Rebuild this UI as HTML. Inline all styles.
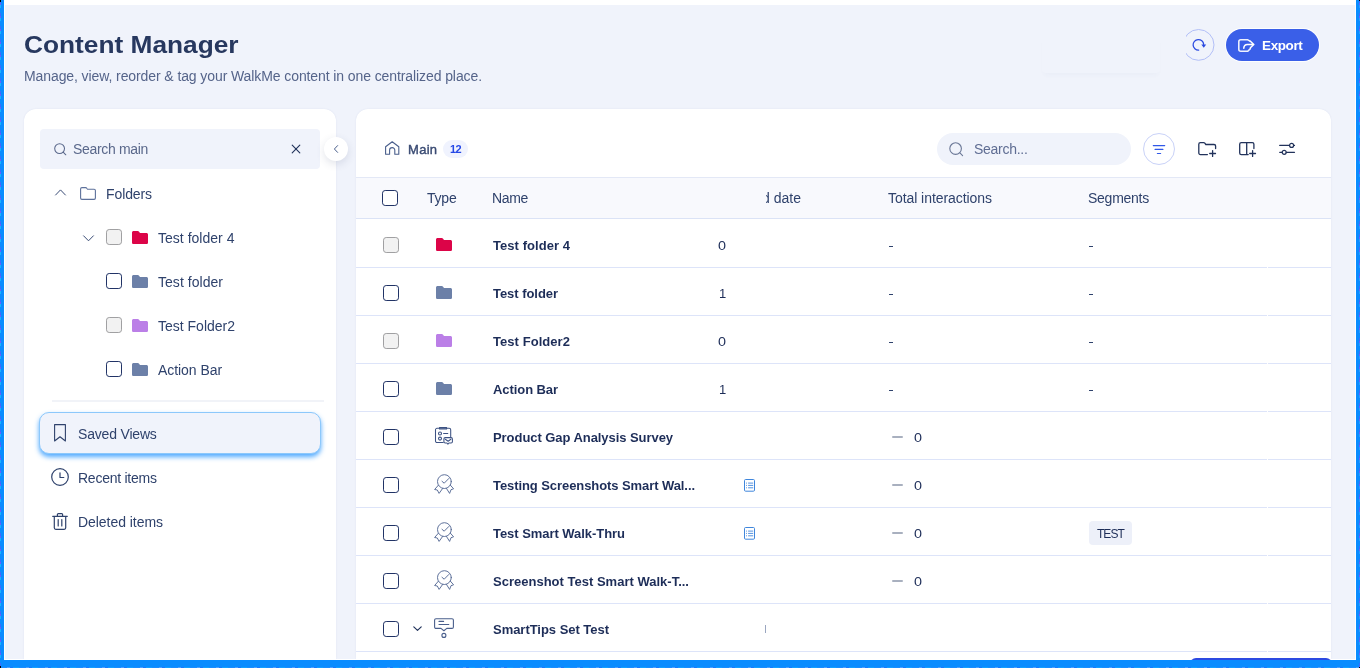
<!DOCTYPE html>
<html><head><meta charset="utf-8"><title>Content Manager</title>
<style>
*{box-sizing:border-box;margin:0;padding:0}
html,body{width:1360px;height:668px;overflow:hidden;background:#fff;font-family:"Liberation Sans",sans-serif;}
#frame{position:absolute;left:0;top:0;width:1360px;height:668px;background:#0a8cff;overflow:hidden}
#topw{position:absolute;left:4px;top:0;width:1352px;height:5px;background:#fff}
#app{position:absolute;left:4px;top:5px;width:1352px;height:655px;background:#fff}
#bg{position:absolute;left:5px;top:5px;width:1350px;height:654px;background:#f0f3fb}
.abs{position:absolute}
.t{position:absolute;white-space:pre;line-height:20px;height:20px;will-change:transform}
.panel{position:absolute;background:#fff;border-radius:12px 12px 0 0;box-shadow:0 0 1.5px rgba(100,120,180,.16)}
.cb{position:absolute;width:16px;height:16px;border:1.5px solid #213366;border-radius:3.2px;background:#fff}
.cb.dis{border:1px solid #a0a0a2;background:#f2f2f2}
.hl{position:absolute;height:1px;background:#dde4f9}
svg{position:absolute;overflow:visible}
</style></head><body>
<div id="frame"></div><div id="topw"></div><div id="app"></div><div id="bg"></div>
<!-- header buttons -->
<div class="abs" style="left:1042px;top:35px;width:118px;height:38px;border-radius:4px;background:rgba(255,255,255,.05);box-shadow:0 4px 5px -2px rgba(60,80,130,.035)"></div>
<svg style="left:1182px;top:28px" width="34" height="34" viewBox="0 0 34 34"><defs><clipPath id="rc"><rect x="4" y="0" width="30" height="34"/></clipPath></defs><g clip-path="url(#rc)"><circle cx="16.6" cy="16.9" r="15.4" fill="none" stroke="#b2bff7" stroke-width="1"/></g>
<path d="M16.7 22.1A5.3 5.3 0 1 1 21.7 16.4" fill="none" stroke="#2a49e0" stroke-width="1.25" stroke-linecap="round"/><path d="M19.3 16.6h4.9l-2.45 3.1z" fill="#2a49e0"/></svg>
<div class="abs" style="left:1226.4px;top:29px;width:92.8px;height:32px;border-radius:16px;background:#3a5fe8;box-shadow:0 0 0 1px rgba(255,255,255,.85)"></div>
<svg style="left:1238px;top:38.6px" width="17" height="13" viewBox="0 0 17 13" fill="none" stroke="#fff" stroke-width="1.55" stroke-linejoin="round" stroke-linecap="round"><path d="M12 2.2L9.8 0.8H2.8C1.7 0.8 0.8 1.7 0.8 2.8v7.4c0 1.1.9 2 2 2h7l2.6-2.6" stroke-opacity=".92"/><path d="M5.8 9.2c0-2.400000000000001 1.3-3.7 3.6-3.7h6M12.4 2.3l3.4 3.2-3.4 3.2"/></svg>

<!-- left panel -->
<div class="panel" style="left:24px;top:109px;width:312px;height:550px"></div>
<div class="abs" style="left:40px;top:129px;width:280px;height:40px;border-radius:4px;background:#f0f3fb"></div>
<svg style="left:54px;top:142.5px" width="13" height="13" viewBox="0 0 13 13" fill="none" stroke="#5a688b" stroke-width="1.05" stroke-linecap="round"><circle cx="5.6" cy="5.6" r="4.9"/><path d="M9.2 9.2L11.8 11.8"/></svg>
<svg style="left:291px;top:144px" width="10" height="10" viewBox="0 0 10 10" fill="none" stroke="#22335b" stroke-width="1.15" stroke-linecap="round"><path d="M1.2 1.2l7.6 7.6M8.8 1.2L1.2 8.8"/></svg>

<!-- tree -->
<svg style="left:54.5px;top:189px" width="11" height="7" viewBox="0 0 11 7" fill="none" stroke="#3a4c76" stroke-width="1" stroke-linecap="round" stroke-linejoin="round"><path d="M0.6 6L5.5 0.9l4.9 5.1"/></svg>
<svg style="left:80px;top:187px" width="16" height="13" viewBox="0 0 16 13" fill="none" stroke="#5d719b" stroke-width="1.1" stroke-linejoin="round"><path d="M1.9 0.6h3.7c.5 0 .9.2 1.1.6l.8 1.1h6.600000000000001c.7 0 1.3.6 1.3 1.3v7.5c0 .7-.6 1.3-1.3 1.3H1.9c-.7 0-1.3-.6-1.3-1.3V1.9c0-.7.6-1.3 1.3-1.3z"/></svg>

<svg style="left:82.5px;top:234.5px" width="11" height="7" viewBox="0 0 11 7" fill="none" stroke="#3a4c76" stroke-width="1" stroke-linecap="round" stroke-linejoin="round"><path d="M0.6 0.8L5.5 5.8l4.9-5"/></svg>
<div class="cb dis" style="left:106px;top:229px"></div>
<svg style="left:132px;top:231px" width="16" height="13" viewBox="0 0 16 13"><path fill="#dc0448" d="M1.6 0h4.1c.5 0 .9.2 1.2.6L8 2h6.4c.9 0 1.600000000000001.7 1.600000000000001 1.600000000000001v7.800000000000001c0 .9-.7 1.600000000000001-1.600000000000001 1.600000000000001H1.6C.7 13 0 12.3 0 11.4V1.6C0 .7.7 0 1.6 0z"/></svg>

<div class="cb" style="left:106px;top:273px"></div>
<svg style="left:132px;top:275px" width="16" height="13" viewBox="0 0 16 13"><path fill="#6c80a8" d="M1.6 0h4.1c.5 0 .9.2 1.2.6L8 2h6.4c.9 0 1.600000000000001.7 1.600000000000001 1.600000000000001v7.800000000000001c0 .9-.7 1.600000000000001-1.600000000000001 1.600000000000001H1.6C.7 13 0 12.3 0 11.4V1.6C0 .7.7 0 1.6 0z"/></svg>

<div class="cb dis" style="left:106px;top:317px"></div>
<svg style="left:132px;top:319px" width="16" height="13" viewBox="0 0 16 13"><path fill="#bb7fe7" d="M1.6 0h4.1c.5 0 .9.2 1.2.6L8 2h6.4c.9 0 1.600000000000001.7 1.600000000000001 1.600000000000001v7.800000000000001c0 .9-.7 1.600000000000001-1.600000000000001 1.600000000000001H1.6C.7 13 0 12.3 0 11.4V1.6C0 .7.7 0 1.6 0z"/></svg>

<div class="cb" style="left:106px;top:361px"></div>
<svg style="left:132px;top:363px" width="16" height="13" viewBox="0 0 16 13"><path fill="#6c80a8" d="M1.6 0h4.1c.5 0 .9.2 1.2.6L8 2h6.4c.9 0 1.600000000000001.7 1.600000000000001 1.600000000000001v7.800000000000001c0 .9-.7 1.600000000000001-1.600000000000001 1.600000000000001H1.6C.7 13 0 12.3 0 11.4V1.6C0 .7.7 0 1.6 0z"/></svg>

<div class="hl" style="left:52px;top:400px;width:272px;background:#f1f3f8;height:2px"></div>

<!-- saved views -->
<div class="abs" style="left:39px;top:412.3px;width:282px;height:41.4px;border-radius:10px;background:#f0f3fb;border:1px solid #8cc8fb;box-shadow:0 3px 5px rgba(50,155,255,.85)"></div>
<svg style="left:54px;top:424px" width="12" height="18" viewBox="0 0 12 18" fill="none" stroke="#2f426c" stroke-width="1.1" stroke-linejoin="round"><path d="M0.6 0.6h10.8v16.4L6 12.7 0.6 17z"/></svg>
<svg style="left:51px;top:468px" width="18" height="18" viewBox="0 0 18 18" fill="none" stroke="#2f426c" stroke-width="1.2" stroke-linecap="round" stroke-linejoin="round"><circle cx="9" cy="9" r="8.3"/><path d="M9 4.8v4.700000000000001h3.8"/></svg>
<svg style="left:52px;top:513px" width="16" height="17" viewBox="0 0 16 17" fill="none" stroke="#2f426c" stroke-width="1.2" stroke-linecap="round" stroke-linejoin="round"><path d="M0.7 3.3h14.6M5.4 3.2V1.6c0-.5.4-.9.9-.9h3.4c.5 0 .9.4.9.9v1.600000000000001M2.3 3.4v11.4c0 .8.7 1.5 1.5 1.5h8.4c.8 0 1.5-.7 1.5-1.5V3.4M6.2 6.6v6.4M9.8 6.6v6.4"/></svg>

<!-- main panel -->
<div class="panel" style="left:356px;top:109px;width:975px;height:550px"></div>
<!-- collapse btn -->
<div class="abs" style="left:324px;top:137px;width:24px;height:24px;border-radius:12px;background:#fff;box-shadow:0 3px 8px rgba(47,66,108,.14)"></div>
<svg style="left:333px;top:144px" width="6" height="10" viewBox="0 0 6 10" fill="none" stroke="#4a5f8c" stroke-width="1" stroke-linecap="round" stroke-linejoin="round"><path d="M4.6 1.600000000000001L1.4 5l3.2 3.4"/></svg>

<!-- breadcrumb -->
<svg style="left:384.8px;top:141.4px" width="15" height="14" viewBox="0 0 15 14" fill="none" stroke="#4a5f8c" stroke-width="1.1" stroke-linejoin="round" stroke-linecap="round"><path d="M0.6 13.2V5.8L7.2 0.7l6.6 5.1v7.4H9.8V9.2c0-1.5-1.100000000000001-2.6-2.6-2.6S4.6 7.7 4.6 9.2v4z"/></svg>
<div class="abs" style="left:442.5px;top:140.2px;width:25.4px;height:17.8px;border-radius:9px;background:#f0f3fe"></div>

<!-- search pill -->
<div class="abs" style="left:937px;top:133px;width:194px;height:32px;border-radius:16px;background:#f0f3fb"></div>
<svg style="left:949px;top:142px" width="15" height="15" viewBox="0 0 15 15" fill="none" stroke="#6b7897" stroke-width="1.1" stroke-linecap="round"><circle cx="6.6" cy="6.6" r="5.8"/><path d="M10.9 10.9L13.6 13.6"/></svg>

<!-- filter -->
<div class="abs" style="left:1143px;top:133px;width:32px;height:32px;border-radius:16px;border:1px solid #c9d2f8;background:#fff"></div>
<svg style="left:1152px;top:144px" width="14" height="11" viewBox="0 0 14 11" fill="none" stroke="#3058e8" stroke-width="1.2" stroke-linecap="round"><path d="M1.3 1.600000000000001h11.4M3.1 5.4h7.800000000000001M5.4 9.5h3.2"/></svg>
<!-- folder plus -->
<svg style="left:1198px;top:141px" width="19" height="16" viewBox="0 0 19 16" fill="none" stroke="#22335b" stroke-width="1.3" stroke-linecap="round" stroke-linejoin="round"><path d="M9.4 13.6H2.4c-.9 0-1.600000000000001-.7-1.600000000000001-1.600000000000001V3.2c0-.9.7-1.600000000000001 1.600000000000001-1.600000000000001h3.2c.5 0 .9.2 1.2.6l1 1.3h8.200000000000001c.9 0 1.600000000000001.7 1.600000000000001 1.600000000000001v2.4M14.6 9.600000000000001v5.800000000000001M11.7 12.5h5.800000000000001"/></svg>
<!-- columns plus -->
<svg style="left:1239px;top:141px" width="18" height="16" viewBox="0 0 18 16" fill="none" stroke="#22335b" stroke-width="1.3" stroke-linecap="round" stroke-linejoin="round"><path d="M9.2 13.6H2.3c-.9 0-1.600000000000001-.7-1.600000000000001-1.600000000000001V3.2c0-.9.7-1.600000000000001 1.600000000000001-1.600000000000001h11c.9 0 1.600000000000001.7 1.600000000000001 1.600000000000001v4.4M7.7 1.600000000000001v12M13.6 9.600000000000001v5.800000000000001M10.7 12.5h5.800000000000001"/></svg>
<!-- sliders -->
<svg style="left:1279px;top:142px" width="17" height="14" viewBox="0 0 17 14" fill="none" stroke="#22335b" stroke-width="1.2" stroke-linecap="round"><path d="M0.7 3.4h9.6M14.6 3.4h.9M0.7 10.3h2.5M7.2 10.3h8.3"/><circle cx="12.6" cy="3.4" r="2"/><circle cx="5.2" cy="10.3" r="2"/></svg>

<!-- table header -->
<div class="abs" style="left:356px;top:177px;width:975px;height:42px;background:#f8f9fd;border-top:1px solid #e3e8f6;border-bottom:1px solid #dbe3f6"></div>
<div class="cb" style="left:382px;top:190px"></div>
<!-- clipped "d date" -->
<div class="abs" style="left:766px;top:188px;width:60px;height:20px;overflow:hidden"><div class="t" style="left:-4px;top:0;font-size:14px;color:#2f426c">d date</div></div>
<!-- rows -->
<div class="abs" style="left:889.3px;top:245.8px;width:3.7px;height:1.4px;background:#2f426c"></div><div class="abs" style="left:1089.3px;top:245.8px;width:3.7px;height:1.4px;background:#2f426c"></div>
<div class="abs" style="left:889.3px;top:293.8px;width:3.7px;height:1.4px;background:#2f426c"></div><div class="abs" style="left:1089.3px;top:293.8px;width:3.7px;height:1.4px;background:#2f426c"></div>
<div class="abs" style="left:889.3px;top:341.8px;width:3.7px;height:1.4px;background:#2f426c"></div><div class="abs" style="left:1089.3px;top:341.8px;width:3.7px;height:1.4px;background:#2f426c"></div>
<div class="abs" style="left:889.3px;top:389.8px;width:3.7px;height:1.4px;background:#2f426c"></div><div class="abs" style="left:1089.3px;top:389.8px;width:3.7px;height:1.4px;background:#2f426c"></div>
<div class="hl" style="left:356px;top:267px;width:975px"></div>
<div class="cb dis" style="left:383px;top:237px"></div>
<svg style="left:436px;top:238px" width="16" height="13" viewBox="0 0 16 13"><path fill="#dc0448" d="M1.6 0h4.1c.5 0 .9.2 1.2.6L8 2h6.4c.9 0 1.6.7 1.6 1.6v7.8c0 .9-.7 1.6-1.6 1.6H1.6C.7 13 0 12.3 0 11.4V1.6C0 .7.7 0 1.6 0z"/></svg>
<div class="hl" style="left:356px;top:315px;width:975px"></div>
<div class="cb" style="left:383px;top:285px"></div>
<svg style="left:436px;top:286px" width="16" height="13" viewBox="0 0 16 13"><path fill="#6c80a8" d="M1.6 0h4.1c.5 0 .9.2 1.2.6L8 2h6.4c.9 0 1.6.7 1.6 1.6v7.8c0 .9-.7 1.6-1.6 1.6H1.6C.7 13 0 12.3 0 11.4V1.6C0 .7.7 0 1.6 0z"/></svg>
<div class="hl" style="left:356px;top:363px;width:975px"></div>
<div class="cb dis" style="left:383px;top:333px"></div>
<svg style="left:436px;top:334px" width="16" height="13" viewBox="0 0 16 13"><path fill="#bb7fe7" d="M1.6 0h4.1c.5 0 .9.2 1.2.6L8 2h6.4c.9 0 1.6.7 1.6 1.6v7.8c0 .9-.7 1.6-1.6 1.6H1.6C.7 13 0 12.3 0 11.4V1.6C0 .7.7 0 1.6 0z"/></svg>
<div class="hl" style="left:356px;top:411px;width:975px"></div>
<div class="cb" style="left:383px;top:381px"></div>
<svg style="left:436px;top:382px" width="16" height="13" viewBox="0 0 16 13"><path fill="#6c80a8" d="M1.6 0h4.1c.5 0 .9.2 1.2.6L8 2h6.4c.9 0 1.6.7 1.6 1.6v7.8c0 .9-.7 1.6-1.6 1.6H1.6C.7 13 0 12.3 0 11.4V1.6C0 .7.7 0 1.6 0z"/></svg>
<div class="hl" style="left:356px;top:459px;width:975px"></div>
<div class="cb" style="left:383px;top:429px"></div>
<div class="hl" style="left:356px;top:507px;width:975px"></div>
<div class="cb" style="left:383px;top:477px"></div>
<div class="hl" style="left:356px;top:555px;width:975px"></div>
<div class="cb" style="left:383px;top:525px"></div>
<div class="hl" style="left:356px;top:603px;width:975px"></div>
<div class="cb" style="left:383px;top:573px"></div>
<div class="hl" style="left:356px;top:651px;width:975px"></div>
<div class="cb" style="left:383px;top:621px"></div>
<svg style="left:434px;top:474px" width="20" height="20" viewBox="0 0 20 20" fill="none" stroke="#566a96" stroke-width="0.95" stroke-linejoin="round" stroke-linecap="round"><circle cx="10.4" cy="7.6" r="6.9"/><path d="M8 7.3l2.2 1.9 4.6-4.700000000000001"/><path d="M4.4 11.2L0.6 15.5l2.7.5 1.8 3.4 3.5-4.900000000000001M16.4 11.2l3.2 3.6-2.6.9-1.4 3.7-3.1-4.900000000000001"/></svg>
<svg style="left:434px;top:522px" width="20" height="20" viewBox="0 0 20 20" fill="none" stroke="#566a96" stroke-width="0.95" stroke-linejoin="round" stroke-linecap="round"><circle cx="10.4" cy="7.6" r="6.9"/><path d="M8 7.3l2.2 1.9 4.6-4.700000000000001"/><path d="M4.4 11.2L0.6 15.5l2.7.5 1.8 3.4 3.5-4.900000000000001M16.4 11.2l3.2 3.6-2.6.9-1.4 3.7-3.1-4.900000000000001"/></svg>
<svg style="left:434px;top:570px" width="20" height="20" viewBox="0 0 20 20" fill="none" stroke="#566a96" stroke-width="0.95" stroke-linejoin="round" stroke-linecap="round"><circle cx="10.4" cy="7.6" r="6.9"/><path d="M8 7.3l2.2 1.9 4.6-4.700000000000001"/><path d="M4.4 11.2L0.6 15.5l2.7.5 1.8 3.4 3.5-4.900000000000001M16.4 11.2l3.2 3.6-2.6.9-1.4 3.7-3.1-4.900000000000001"/></svg>
<svg style="left:435px;top:427px" width="18" height="18" viewBox="0 0 18 18" fill="none" stroke="#3d5283" stroke-width="1.05" stroke-linejoin="round" stroke-linecap="round"><path d="M8.2 15.5H2c-.8 0-1.5-.7-1.5-1.5V2.8c0-.8.7-1.5 1.5-1.5h12.2c.8 0 1.5.7 1.5 1.5v7"/><path d="M4.5 0.55h7.1v1.5H4.5z"/><circle cx="5" cy="6.4" r="1.5"/><circle cx="5" cy="11.6" r="1.5"/><path d="M8.6 6.4h4.2"/><path d="M10.2 10.6h5.9c.7 0 1.3.6 1.3 1.3v2.8c0 .7-.6 1.3-1.3 1.3h-2.2l-1 1.1-1-1.1h-1.7c-.7 0-1.3-.6-1.3-1.3v-2.8c0-.7.6-1.3 1.3-1.3z" fill="#fff"/><path d="M10.3 12.3l2.8 1.9 2.8-1.9"/></svg>
<svg style="left:434px;top:617px" width="20" height="21" viewBox="0 0 20 21" fill="none" stroke="#4a5f8c" stroke-width="1.1" stroke-linejoin="round" stroke-linecap="round"><path d="M2 1.7h16c.8 0 1.4.6 1.4 1.4v6.9c0 .8-.6 1.4-1.4 1.4h-5.2L9.9 13.700000000000001 7 11.4H2c-.8 0-1.4-.6-1.4-1.4V3.1c0-.8.6-1.4 1.4-1.4z"/><path d="M5 4.4h4.6M5 7.5h9.8"/><circle cx="9.9" cy="18.4" r="2"/></svg>
<svg style="left:412.6px;top:626.4px" width="9" height="6" viewBox="0 0 9 6" fill="none" stroke="#22335b" stroke-width="1.2" stroke-linecap="round" stroke-linejoin="round"><path d="M0.8 0.9L4.5 4.4 8.2 0.9"/></svg>
<svg style="left:743.9px;top:479.3px" width="11" height="13" viewBox="0 0 11 13" fill="none" stroke="#3f86dc" stroke-width="1" stroke-linecap="butt"><rect x="0.5" y="0.5" width="10" height="11.7" rx="1.1" fill="#fff"/><path d="M2.1 4.1h.9M4.1 4.1h5.1M2.1 6.4h.9M4.1 6.4h5.1M2.1 8.8h.9M4.1 8.8h5.1" stroke-width="0.9"/></svg>
<svg style="left:743.9px;top:527.3px" width="11" height="13" viewBox="0 0 11 13" fill="none" stroke="#3f86dc" stroke-width="1" stroke-linecap="butt"><rect x="0.5" y="0.5" width="10" height="11.7" rx="1.1" fill="#fff"/><path d="M2.1 4.1h.9M4.1 4.1h5.1M2.1 6.4h.9M4.1 6.4h5.1M2.1 8.8h.9M4.1 8.8h5.1" stroke-width="0.9"/></svg>
<div class="abs" style="left:892px;top:436px;width:11px;height:2px;background:#a9b0bf;border-radius:1px"></div>
<div class="abs" style="left:892px;top:484px;width:11px;height:2px;background:#a9b0bf;border-radius:1px"></div>
<div class="abs" style="left:892px;top:532px;width:11px;height:2px;background:#a9b0bf;border-radius:1px"></div>
<div class="abs" style="left:892px;top:580px;width:11px;height:2px;background:#a9b0bf;border-radius:1px"></div>
<div class="abs" style="left:1267px;top:260px;width:1px;height:398px;background:#fff"></div>
<div class="abs" style="left:1089px;top:521.2px;width:43.4px;height:23.7px;border-radius:4px;background:#edf0f9"></div>
<div class="abs" style="left:765px;top:625px;width:1px;height:8px;background:#9aa6c0"></div>
<div class="abs" style="left:4px;top:659px;width:1352px;height:1px;background:#fff"></div><div class="abs" style="left:1190px;top:657.7px;width:141.5px;height:20px;border-radius:6px;background:#2c49e2"></div><div class="abs" style="left:0;top:660px;width:1360px;height:8px;background:#0a8cff"></div><div class="abs" style="left:0;top:0;width:1px;height:668px;background:repeating-linear-gradient(180deg,#3a6cff 0 3px,#6a5cff 3px 5px,#19b4ff 5px 8px,#0a8cff 8px 13px)"></div><div class="abs" style="left:0;top:667px;width:1360px;height:1px;background:repeating-linear-gradient(90deg,#1a8cff 0 7px,#4aa0ff 7px 10px,#1a78ff 10px 13px,#12a0ff 13px 19px)"></div><div class="abs" style="left:1359px;top:0;width:1px;height:668px;background:repeating-linear-gradient(180deg,#3a6cff 0 3px,#6a5cff 3px 5px,#2a9cff 5px 8px,#0a8cff 8px 13px)"></div><div class="abs" style="left:0;top:0;width:1px;height:2px;background:#000"></div><div class="abs" style="left:1359px;top:0;width:1px;height:1px;background:#000"></div><div class="abs" style="left:0;top:666px;width:1px;height:2px;background:#000"></div><div class="abs" style="left:1359px;top:667px;width:1px;height:1px;background:#000"></div>

<div class="t" style="left:24px;top:34.50px;font-size:24px;font-weight:700;color:#27385f;transform:scaleX(1.0948);transform-origin:0 0;">Content Manager</div>
<div class="t" style="left:24px;top:66.00px;font-size:14px;color:#55648a;letter-spacing:-0.094px;">Manage, view, reorder &amp; tag your WalkMe content in one centralized place.</div>
<div class="t" style="left:1261.8px;top:35.50px;font-size:13.5px;font-weight:700;color:#ffffff;letter-spacing:-0.378px;">Export</div>
<div class="t" style="left:73px;top:139.00px;font-size:14px;color:#5a688b;letter-spacing:-0.327px;">Search main</div>
<div class="t" style="left:106px;top:184.00px;font-size:14px;color:#2f426c;letter-spacing:-0.098px;">Folders</div>
<div class="t" style="left:158px;top:228.00px;font-size:14px;color:#2f426c;letter-spacing:0.018px;">Test folder 4</div>
<div class="t" style="left:158px;top:272.00px;font-size:14px;color:#2f426c;letter-spacing:0.037px;">Test folder</div>
<div class="t" style="left:158px;top:316.00px;font-size:14px;color:#2f426c;">Test Folder2</div>
<div class="t" style="left:158px;top:360.00px;font-size:14px;color:#2f426c;letter-spacing:-0.059px;">Action Bar</div>
<div class="t" style="left:78px;top:424.00px;font-size:14px;color:#2f426c;letter-spacing:-0.181px;">Saved Views</div>
<div class="t" style="left:78px;top:468.00px;font-size:14px;color:#2f426c;letter-spacing:-0.250px;">Recent items</div>
<div class="t" style="left:78px;top:512.00px;font-size:14px;color:#2f426c;letter-spacing:-0.046px;">Deleted items</div>
<div class="t" style="left:408px;top:139.50px;font-size:13px;color:#3a4b73;letter-spacing:0.303px;-webkit-text-stroke:0.4px #3a4b73;">Main</div>
<div class="t" style="left:450px;top:139.00px;font-size:11px;font-weight:700;color:#2548e6;letter-spacing:-0.625px;">12</div>
<div class="t" style="left:974px;top:139.00px;font-size:14px;color:#5f6d93;letter-spacing:-0.281px;">Search...</div>
<div class="t" style="left:427px;top:188.00px;font-size:14px;color:#2f426c;letter-spacing:-0.215px;">Type</div>
<div class="t" style="left:492px;top:188.00px;font-size:14px;color:#2f426c;letter-spacing:-0.340px;">Name</div>
<div class="t" style="left:888px;top:188.00px;font-size:14px;color:#2f426c;letter-spacing:-0.059px;">Total interactions</div>
<div class="t" style="left:1088px;top:188.00px;font-size:14px;color:#2f426c;letter-spacing:-0.256px;">Segments</div>
<div class="t" style="left:493px;top:235.50px;font-size:13px;font-weight:700;color:#1d2d58;letter-spacing:0.050px;">Test folder 4</div>
<div class="t" style="left:493px;top:283.50px;font-size:13px;font-weight:700;color:#1d2d58;letter-spacing:-0.045px;">Test folder</div>
<div class="t" style="left:493px;top:331.50px;font-size:13px;font-weight:700;color:#1d2d58;letter-spacing:0.055px;">Test Folder2</div>
<div class="t" style="left:493px;top:379.50px;font-size:13px;font-weight:700;color:#1d2d58;letter-spacing:-0.073px;">Action Bar</div>
<div class="t" style="left:493px;top:427.50px;font-size:13px;font-weight:700;color:#1d2d58;letter-spacing:-0.059px;">Product Gap Analysis Survey</div>
<div class="t" style="left:493px;top:475.50px;font-size:13px;font-weight:700;color:#1d2d58;letter-spacing:-0.077px;">Testing Screenshots Smart Wal...</div>
<div class="t" style="left:493px;top:523.50px;font-size:13px;font-weight:700;color:#1d2d58;letter-spacing:-0.046px;">Test Smart Walk-Thru</div>
<div class="t" style="left:493px;top:571.50px;font-size:13px;font-weight:700;color:#1d2d58;letter-spacing:0.007px;">Screenshot Test Smart Walk-T...</div>
<div class="t" style="left:493px;top:619.50px;font-size:13px;font-weight:700;color:#1d2d58;letter-spacing:-0.031px;">SmartTips Set Test</div>
<div class="t" style="left:718px;top:235.50px;font-size:13px;color:#1d2d58;transform:scaleX(1.1058);transform-origin:0 0;">0</div>
<div class="t" style="left:719px;top:283.50px;font-size:13px;color:#1d2d58;">1</div>
<div class="t" style="left:718px;top:331.50px;font-size:13px;color:#1d2d58;transform:scaleX(1.1058);transform-origin:0 0;">0</div>
<div class="t" style="left:719px;top:379.50px;font-size:13px;color:#1d2d58;">1</div>
<div class="t" style="left:914.3px;top:427.50px;font-size:13px;color:#1d2d58;transform:scaleX(1.1058);transform-origin:0 0;">0</div>
<div class="t" style="left:914.3px;top:475.50px;font-size:13px;color:#1d2d58;transform:scaleX(1.1058);transform-origin:0 0;">0</div>
<div class="t" style="left:914.3px;top:523.50px;font-size:13px;color:#1d2d58;transform:scaleX(1.1058);transform-origin:0 0;">0</div>
<div class="t" style="left:914.3px;top:571.50px;font-size:13px;color:#1d2d58;transform:scaleX(1.1058);transform-origin:0 0;">0</div>
<div class="t" style="left:1097.4px;top:524.00px;font-size:12px;color:#1d2d58;letter-spacing:-0.968px;">TEST</div>
</body></html>
